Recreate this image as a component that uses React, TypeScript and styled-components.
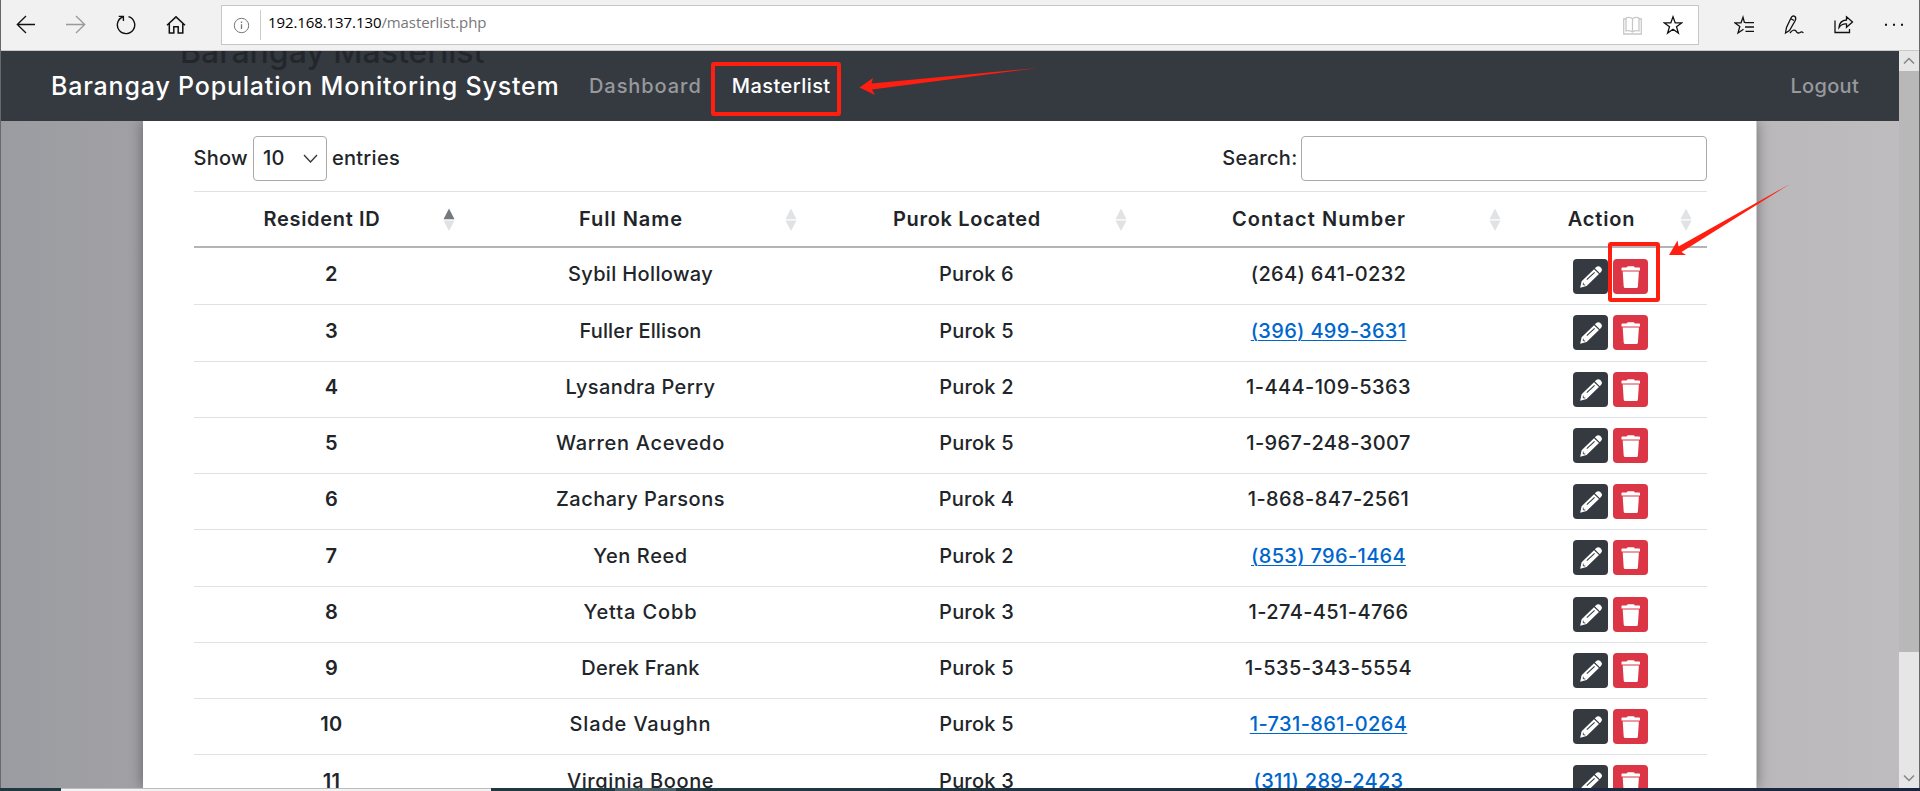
import React from "react";
import styled, { createGlobalStyle } from "styled-components";

const GlobalStyle = createGlobalStyle`
  * { box-sizing: border-box; }
  body { margin: 0; overflow: hidden; }
`;

const Window = styled.div`
  width: 1920px;
  height: 791px;
  overflow: hidden;
  display: flex;
  flex-direction: column;
  position: relative;
  font-family: Inter, "Open Sans", sans-serif;
  font-size: 20px;
  line-height: 30px;
  color: #212529;
  background: #fff;
`;

const BrowserBar = styled.header`
  height: 51px;
  flex: none;
  display: flex;
  align-items: flex-start;
  padding: 5px 16px 0 16px;
  background: #f1f1f1;
  border: solid #c9c9c9;
  border-width: 0 0 1px;
`;

const IconGroup = styled.div<{ $gap: number; $left?: number }>`
  display: flex;
  gap: ${(p) => p.$gap}px;
  margin-left: ${(p) => p.$left ?? 0}px;
  padding-top: 10px;
`;

const Glyph = styled.svg<{ $color?: string }>`
  display: block;
  flex: none;
  width: 20px;
  height: 20px;
  fill: none;
  stroke: ${(p) => p.$color ?? "#111"};
  stroke-width: 1.3;
`;

const AddressBar = styled.div`
  width: 1478px;
  height: 40px;
  margin-left: 35px;
  display: flex;
  align-items: center;
  padding: 0 15px 0 9px;
  background: #fff;
  border: 1px solid #c6c6c6;
`;

const Divider = styled.span`
  width: 1px;
  height: 30px;
  margin: 0 7px 0 9px;
  background: #ccc;
`;

const Address = styled.span`
  flex: 1;
  font-family: "Open Sans", sans-serif;
  font-size: 15px;
  line-height: 20px;
  letter-spacing: -0.09px;
  padding-bottom: 6px;
  color: #777;
`;

const Host = styled.span`
  color: #000;
`;

const AddressIcons = styled.div`
  display: flex;
  gap: 20px;
`;

const Viewport = styled.div`
  height: 737px;
  flex: none;
  display: flex;
`;

const Page = styled.div`
  width: 1899px;
  flex: none;
  display: flex;
  flex-direction: column;
  align-items: center;
  overflow: hidden;
  background: linear-gradient(90deg, #9b9ca1 0, #a1a1a5 143px, #aaa9ad 900px, #bab8ba 1757px, #bebcbf 1899px);
`;

const Navbar = styled.nav`
  position: relative;
  z-index: 1;
  align-self: stretch;
  height: 70px;
  flex: none;
  display: flex;
  align-items: center;
  overflow: hidden;
  padding: 0 40px 0 51px;
  background: #353a41;
`;

const ScrolledHeading = styled.h2`
  position: absolute;
  left: 180px;
  top: -18px;
  margin: 0;
  font-size: 32px;
  line-height: 38px;
  font-weight: 500;
  letter-spacing: 0;
  white-space: nowrap;
  color: #23272c;
`;

const Brand = styled.a`
  position: relative;
  width: 538px;
  font-size: 25px;
  font-weight: 500;
  letter-spacing: 0.81px;
  white-space: nowrap;
  color: #fff;
`;

const NavLink = styled.a<{ $active?: boolean; $track: number; $push?: boolean }>`
  margin-left: ${(p) => (p.$push ? "auto" : "0")};
  margin-right: ${(p) => (p.$push ? "0" : "30px")};
  font-weight: 500;
  letter-spacing: ${(p) => p.$track}px;
  color: ${(p) => (p.$active ? "#fff" : "#97999c")};
`;

const Card = styled.main`
  width: 1614px;
  flex: 1;
  min-height: 0;
  padding: 15px 50px 0 51px;
  background: #fff;
  border: solid #c9c9cb;
  border-width: 0 1px 0 0;
  box-shadow: 0 0 13px rgba(0, 0, 0, 0.4);
`;

const Controls = styled.div`
  display: flex;
  justify-content: space-between;
  height: 55px;
  margin-right: -1px;
`;

const Control = styled.label<{ $gap: number; $track?: number }>`
  display: flex;
  align-items: center;
  gap: ${(p) => p.$gap}px;
  height: 45px;
  font-weight: 500;
  letter-spacing: ${(p) => p.$track ?? 0.28}px;
`;

const ControlText = styled.span`
  padding-bottom: 2px;
`;

const Select = styled.span`
  width: 74px;
  height: 45px;
  display: flex;
  align-items: center;
  justify-content: space-between;
  padding: 0 6px 0 9px;
  border: 1px solid #aaa;
  border-radius: 4px;
`;

const SearchInput = styled.input`
  width: 406px;
  height: 45px;
  border: 1px solid #aaa;
  border-radius: 4px;
  background: #fff;
`;

const Row = styled.div`
  display: grid;
  grid-template-columns: 276px 342px 330px 374px 191px;
  height: 56.25px;
  margin-right: -1px;
  border-bottom: 1px solid #dee2e6;
`;

const HeadRow = styled(Row)`
  height: 57px;
  border-top: 1px solid #dee2e6;
  border-bottom: 2px solid #b2b4b7;
  margin-bottom: 1px;
`;

const HeadCell = styled.div<{ $track: number }>`
  position: relative;
  display: flex;
  align-items: center;
  justify-content: center;
  padding-right: 19px;
  font-weight: 600;
  letter-spacing: ${(p) => p.$track}px;
`;

const SortIcon = styled.svg`
  position: absolute;
  right: 15px;
  top: 16px;
  width: 12px;
  height: 24px;
`;

const Cell = styled.div<{ $bold?: boolean; $track?: number }>`
  padding-top: 10.4px;
  text-align: center;
  font-weight: ${(p) => (p.$bold ? 600 : 450)};
  letter-spacing: ${(p) => p.$track ?? 0.3}px;
`;

const PhoneLink = styled.a`
  color: #0066cc;
  text-decoration: underline;
  text-decoration-thickness: 1px;
  text-underline-offset: 2px;
`;

const Actions = styled.div`
  display: flex;
  justify-content: center;
  gap: 5px;
  padding: 10px 2px 0 0;
`;

const ActionButton = styled.button<{ $danger?: boolean }>`
  width: 35px;
  height: 35px;
  padding: 0;
  border: 0;
  border-radius: 4px;
  background: ${(p) => (p.$danger ? "#dc3545" : "#343a40")};
`;

const ButtonArt = styled.svg`
  display: block;
  width: 35px;
  height: 35px;
`;

const Scrollbar = styled.div`
  width: 20px;
  display: flex;
  flex-direction: column;
  align-items: center;
  background: #e6e6e6;
`;

const ScrollThumb = styled.div`
  width: 20px;
  height: 581px;
  background: #b8b8b8;
`;

const ScrollArrow = styled.svg<{ $down?: boolean }>`
  width: 20px;
  height: 20px;
  flex: none;
  margin-top: ${(p) => (p.$down ? "auto" : "0")};
  fill: none;
  stroke: #858585;
  stroke-width: 1.5;
`;

const Taskbar = styled.div`
  display: flex;
  height: 3px;
  flex: none;
  background: linear-gradient(90deg, #203940 0, #203940 700px, #19243f 1920px);
`;

const TaskbarItem = styled.div<{ $left: number; $width: number; $light?: boolean }>`
  margin-left: ${(p) => p.$left}px;
  width: ${(p) => p.$width}px;
  background: ${(p) => (p.$light ? "#f3f3f3" : "#4b6168")};
  border-top: ${(p) => (p.$light ? "1px solid #bcbcbc" : "0")};
`;

const WindowEdge = styled.span<{ $right?: boolean }>`
  position: absolute;
  top: 0;
  bottom: 3px;
  width: 1px;
  left: ${(p) => (p.$right ? "1919px" : "0")};
  background: #66686a;
  z-index: 3;
`;

const Highlight = styled.div<{ $x: number; $y: number; $w: number; $h: number }>`
  position: absolute;
  z-index: 2;
  left: ${(p) => p.$x}px;
  top: ${(p) => p.$y}px;
  width: ${(p) => p.$w}px;
  height: ${(p) => p.$h}px;
  border: 4px solid #ff1e10;
  border-radius: 3px;
`;

const Arrows = styled.svg`
  position: absolute;
  z-index: 2;
  left: 0;
  top: 0;
  width: 1920px;
  height: 300px;
  fill: #ff1e10;
  pointer-events: none;
`;

const columns = [
  { label: "Resident ID", track: 0.68 },
  { label: "Full Name", track: 0.98 },
  { label: "Purok Located", track: 0.68 },
  { label: "Contact Number", track: 1.07 },
  { label: "Action", track: 0.85 },
];

const residents = [
  { id: 2, name: "Sybil Holloway", track: 0.35, purok: 6, phone: "(264) 641-0232", link: false },
  { id: 3, name: "Fuller Ellison", track: 0.14, purok: 5, phone: "(396) 499-3631", link: true },
  { id: 4, name: "Lysandra Perry", track: 0.4, purok: 2, phone: "1-444-109-5363", link: false },
  { id: 5, name: "Warren Acevedo", track: 0.7, purok: 5, phone: "1-967-248-3007", link: false },
  { id: 6, name: "Zachary Parsons", track: 0.5, purok: 4, phone: "1-868-847-2561", link: false },
  { id: 7, name: "Yen Reed", track: 0.6, purok: 2, phone: "(853) 796-1464", link: true },
  { id: 8, name: "Yetta Cobb", track: 0.9, purok: 3, phone: "1-274-451-4766", link: false },
  { id: 9, name: "Derek Frank", track: 0.3, purok: 5, phone: "1-535-343-5554", link: false },
  { id: 10, name: "Slade Vaughn", track: 0.85, purok: 5, phone: "1-731-861-0264", link: true },
  { id: 11, name: "Virginia Boone", track: 0.6, purok: 3, phone: "(311) 289-2423", link: true },
];

const STAR = "M10 1.8 12.2 7.9H18.6L13.5 11.8 15.4 18.1 10 14.3 4.6 18.1 6.5 11.8 1.4 7.9H7.8Z";

const PencilArt = () => (
  <ButtonArt viewBox="0 0 35 35">
    <path fill="#fff" d="M7.2 28.8 8.6 22.2 21 10.2 26 15 13.6 26.9ZM21.8 9.3 24 7.6Q25.7 6.5 27.3 8L28.2 9Q29.7 10.7 28.5 12.3L26.8 14.2Z" />
    <path stroke="#343a40" strokeWidth="1.1" fill="none" d="M13.8 20.6 21.6 13.4" />
    <path fill="#343a40" d="M10.3 23 10.7 25.2 13 25.9 11 26.6 9.6 25.3Z" />
  </ButtonArt>
);

const TrashArt = () => (
  <ButtonArt viewBox="0 0 35 35">
    <path fill="#fff" d="M8.5 9.2Q8.5 8.5 9.3 8.5H13.6Q14.2 7.2 15.3 7.2H20.2Q21.3 7.2 21.9 8.5H26.2Q27 8.5 27 9.2V11.5H8.5ZM9.7 12.6H25.9L24.9 27.4Q24.8 28.9 23.4 28.9H12.2Q10.8 28.9 10.7 27.4Z" />
  </ButtonArt>
);

export default function App() {
  return (
    <Window>
      <GlobalStyle />
      <BrowserBar>
        <IconGroup $gap={30}>
          <Glyph viewBox="0 0 20 20"><path d="M19 9.5H1.3M10 1 1.3 9.5 10 18" /></Glyph>
          <Glyph viewBox="0 0 20 20" $color="#999"><path d="M0 9.5H18.7M10 1 18.7 9.5 10 18" /></Glyph>
          <Glyph viewBox="0 0 20 20"><path strokeWidth="1.4" d="M12.5 1.6A8.7 8.7 0 1 1 6.5 2M2.7 1.4H7.4V6" /></Glyph>
          <Glyph viewBox="0 0 20 20"><path strokeWidth="1.5" d="M1 10.3 10 1.9 19 10.3M3.3 8.5V18H7.8V11.8H12.2V18H16.8V8.5" /></Glyph>
        </IconGroup>
        <AddressBar>
          <Glyph viewBox="0 0 20 20" $color="#777"><circle cx="10.5" cy="10.5" r="7.2" strokeWidth="1" /><path d="M10.5 9.3V14M10.5 6.5V8" /></Glyph>
          <Divider />
          <Address><Host>192.168.137.130</Host>/masterlist.php</Address>
          <AddressIcons>
            <Glyph viewBox="0 0 20 20" $color="#c8c8c8"><path d="M9.5 3.5Q5.5 1.5 3 3V16Q6.5 15 9.5 17Q12.5 15 16 16V3Q13.5 1.5 9.5 3.5V17M3 4H.7V19H18.3V4H16" /></Glyph>
            <Glyph viewBox="0 0 20 20"><path d={STAR} /></Glyph>
          </AddressIcons>
        </AddressBar>
        <IconGroup $gap={30} $left={35}>
          <Glyph viewBox="0 0 20 20"><path d="M10.5 7.9 9 2.3 7 7.9H1L5.8 11.5 4 18 9.5 14.3M11 7.6H20M11 12H20M11.5 16.4H20" /></Glyph>
          <Glyph viewBox="0 0 20 20"><path d="M1.5 18 2.5 12.5 7 3Q8.5 0 11 1.5Q12.5 3 11 6L5.5 15.5ZM6.5 3.5 10 5.5M6 18Q9.5 13.5 12 16Q13.5 19 16 17.5Q18 16 19.3 18" /></Glyph>
          <Glyph viewBox="0 0 20 20"><path d="M1 5.5V17.5H15.5V14M12.5 1.8 18.5 7 12.5 12.3V9Q8 8.5 5 12.5Q5.5 5.5 12.5 5Z" /></Glyph>
          <Glyph viewBox="0 0 20 20"><path strokeWidth="2" d="M1 9.7H3M9 9.7H11M17 9.7H19" /></Glyph>
        </IconGroup>
      </BrowserBar>

      <Viewport>
        <Page>
          <Navbar>
            <ScrolledHeading>Barangay Masterlist</ScrolledHeading>
            <Brand>Barangay Population Monitoring System</Brand>
            <NavLink $track={0.93}>Dashboard</NavLink>
            <NavLink $track={0.45} $active>Masterlist</NavLink>
            <NavLink $track={0.3} $push>Logout</NavLink>
          </Navbar>
          <Card>
            <Controls>
              <Control $gap={5}>
                <ControlText>Show</ControlText>
                <Select>
                  <ControlText>10</ControlText>
                  <Glyph viewBox="0 0 20 20" $color="#333"><path d="M4 6 10.5 13 17 6" /></Glyph>
                </Select>
                <ControlText>entries</ControlText>
              </Control>
              <Control $gap={3}>
                <ControlText>Search:</ControlText>
                <SearchInput />
              </Control>
            </Controls>
            <HeadRow>
              {columns.map((c, i) => (
                <HeadCell key={c.label} $track={c.track}>
                  {c.label}
                  <SortIcon viewBox="0 0 12 24">
                    <path fill={i === 0 ? "#75787c" : "#e0e2e3"} d="M6 .5 11.5 11.3H.5Z" />
                    <path fill="#e0e2e3" d="M6 23 11.5 12.5H.5Z" />
                  </SortIcon>
                </HeadCell>
              ))}
            </HeadRow>
            {residents.map((r) => (
              <Row key={r.id}>
                <Cell $bold>{r.id}</Cell>
                <Cell $track={r.track}>{r.name}</Cell>
                <Cell $track={0.2}>Purok {r.purok}</Cell>
                <Cell $track={r.phone.startsWith("1") ? 0.4 : 0.32}>{r.link ? <PhoneLink>{r.phone}</PhoneLink> : r.phone}</Cell>
                <Actions>
                  <ActionButton><PencilArt /></ActionButton>
                  <ActionButton $danger><TrashArt /></ActionButton>
                </Actions>
              </Row>
            ))}
          </Card>
        </Page>
        <Scrollbar>
          <ScrollArrow viewBox="0 0 20 20"><path d="M5 12.5 10 7.5 15 12.5" /></ScrollArrow>
          <ScrollThumb />
          <ScrollArrow $down viewBox="0 0 20 20"><path d="M5 7.5 10 12.5 15 7.5" /></ScrollArrow>
        </Scrollbar>
      </Viewport>

      <Taskbar>
        <TaskbarItem $left={61} $width={430} $light />
        <TaskbarItem $left={124} $width={61} />
      </Taskbar>

      <Highlight $x={711} $y={62} $w={130} $h={54} />
      <Highlight $x={1608} $y={242} $w={52} $h={60} />
      <Arrows viewBox="0 0 1920 300">
        <path d="M859.5 87.5 873 78 871.5 83.5 1038 68 872 89.5 875 95Z" />
        <path d="M1669 255 1677.5 240.5 1678.5 246.5 1790 184 1681.5 252 1686 255Z" />
      </Arrows>
      <WindowEdge />
      <WindowEdge $right />
    </Window>
  );
}
